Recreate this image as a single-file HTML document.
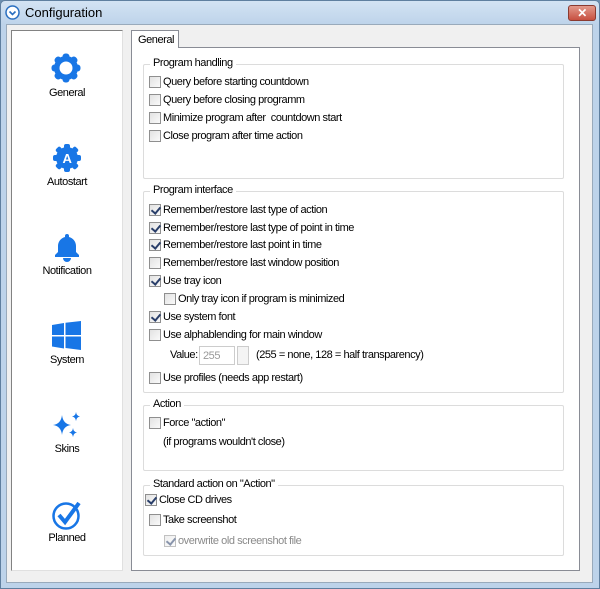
<!DOCTYPE html>
<html><head><style>
*{margin:0;padding:0;box-sizing:border-box}
body{width:600px;height:589px;overflow:hidden;font-family:"Liberation Sans",sans-serif;font-size:11px;letter-spacing:-0.45px;color:#000;background:#6d8fb0;position:relative}
.win{position:absolute;left:0;top:0;width:600px;height:589px;background:linear-gradient(#d3e3f3,#bdd3ea 24px);border:1px solid #5f7f9f;border-radius:5px 5px 0 0}
.body{position:absolute;left:6px;top:24px;width:587px;height:559px;background:#f0f0f0;border:1px solid #99aabb}
.a{position:absolute;white-space:nowrap}
.cb{position:absolute;width:12px;height:12px;border:1px solid #8f8f8f;background:linear-gradient(135deg,#e2e2e2,#fafafa)}
.cb.c::after{content:"";position:absolute;left:3px;top:0px;width:4px;height:7px;border:solid #2a3f6a;border-width:0 2px 2px 0;transform:rotate(40deg)}
.cb.d{opacity:.55}
.g{position:absolute;left:143px;width:421px;border:1px solid #dcdcdc;border-radius:2px}
.gt{position:absolute;left:6px;top:-8px;background:#fff;padding:0 3px}
.nav{position:absolute;text-align:center;width:112px;left:11px}
</style></head><body>
<div class="win">
<svg class="a" style="left:4px;top:4px" width="15" height="15"><circle cx="7.5" cy="7.5" r="6.5" fill="#fff" stroke="#2a6fc0" stroke-width="1.5"/><path d="M4.5 6.5 L7.5 9.5 L10.5 6.5" fill="none" stroke="#2a6fc0" stroke-width="1.6"/></svg>
<div class="a" style="left:24px;top:4px;font-size:13px;letter-spacing:0">Configuration</div>
<div class="a" style="left:567px;top:4px;width:28px;height:16px;border-radius:3px;background:linear-gradient(#e39a8c,#c75040);border:1px solid #8a3a30;color:#fff;font-weight:bold;text-align:center;line-height:14px;font-size:12px">✕</div>
</div>
<div class="body"></div>
<div class="a" style="left:11px;top:30px;width:112px;height:541px;background:#fff;border:1px solid #828282;border-right-color:#e0e0e0;border-bottom-color:#e0e0e0"></div>
<svg class="a" style="left:51px;top:53px" width="30" height="30" viewBox="0 0 30 30"><g fill="#1876e6"><circle cx="15" cy="15" r="12"/><g><rect x="11.5" y="0.5" width="7" height="29" rx="3"/><rect x="11.5" y="0.5" width="7" height="29" rx="3" transform="rotate(45 15 15)"/><rect x="11.5" y="0.5" width="7" height="29" rx="3" transform="rotate(90 15 15)"/><rect x="11.5" y="0.5" width="7" height="29" rx="3" transform="rotate(135 15 15)"/></g></g><circle cx="15" cy="15" r="6.5" fill="#fff"/></svg>
<div class="nav" style="top:87px">General</div>
<svg class="a" style="left:52px;top:143px" width="30" height="30" viewBox="0 0 30 30"><g fill="#1876e6"><circle cx="15" cy="15" r="11"/><rect x="12" y="1" width="6" height="28" rx="2"/><rect x="12" y="1" width="6" height="28" rx="2" transform="rotate(45 15 15)"/><rect x="12" y="1" width="6" height="28" rx="2" transform="rotate(90 15 15)"/><rect x="12" y="1" width="6" height="28" rx="2" transform="rotate(135 15 15)"/></g><text x="15" y="20" text-anchor="middle" fill="#fff" font-family="Liberation Sans" font-weight="bold" font-size="13">A</text></svg>
<div class="nav" style="top:176px">Autostart</div>
<svg class="a" style="left:52px;top:232px" width="30" height="30" viewBox="0 0 30 30"><path d="M15 2a2 2 0 0 1 2 2v1c4 1 7 4.5 7 9v6l3 3v2H3v-2l3-3v-6c0-4.5 3-8 7-9V4a2 2 0 0 1 2-2z" fill="#1876e6"/><path d="M11 26h8a4 4 0 0 1-8 0z" fill="#1876e6"/></svg>
<div class="nav" style="top:265px">Notification</div>
<svg class="a" style="left:52px;top:321px" width="29" height="29" viewBox="0 0 29 29"><path d="M0 4l12-2v12H0zM13.5 1.8L29 0v14H13.5zM0 15.5h12v12L0 25.5zM13.5 15.5H29V29l-15.5-2z" fill="#1876e6"/></svg>
<div class="nav" style="top:354px">System</div>
<svg class="a" style="left:52px;top:410px" width="30" height="30" viewBox="0 0 30 30"><g fill="#1876e6"><path d="M10 5 Q11 14 19 15 Q11 16 10 25 Q9 16 1 15 Q9 14 10 5z"/><path d="M24 2 Q24.5 6 28 6.5 Q24.5 7 24 11 Q23.5 7 20 6.5 Q23.5 6 24 2z"/><path d="M21 18 Q21.5 22 25 22.5 Q21.5 23 21 27 Q20.5 23 17 22.5 Q20.5 22 21 18z"/></g></svg>
<div class="nav" style="top:443px">Skins</div>
<svg class="a" style="left:51px;top:499px" width="32" height="32" viewBox="0 0 32 32"><circle cx="15" cy="17" r="12.5" fill="none" stroke="#1876e6" stroke-width="2.5"/><path d="M8 16l6 7L28 4" fill="none" stroke="#1876e6" stroke-width="4"/></svg>
<div class="nav" style="top:532px">Planned</div>
<div class="a" style="left:131px;top:47px;width:449px;height:524px;background:#fff;border:1px solid #898c95"></div>
<div class="a" style="left:131px;top:30px;width:48px;height:18px;background:#fff;border:1px solid #898c95;border-bottom:none;padding:3px 0 0 6px">General</div>
<div class="g" style="top:64px;height:115px"><span class="gt">Program handling</span></div>
<div class="cb" style="left:149px;top:76px"></div><div class="a" style="left:163px;top:76px">Query before starting countdown</div>
<div class="cb" style="left:149px;top:94px"></div><div class="a" style="left:163px;top:94px">Query before closing programm</div>
<div class="cb" style="left:149px;top:112px"></div><div class="a" style="left:163px;top:112px">Minimize program after&nbsp; countdown start</div>
<div class="cb" style="left:149px;top:130px"></div><div class="a" style="left:163px;top:130px">Close program after time action</div>
<div class="g" style="top:191px;height:202px"><span class="gt">Program interface</span></div>
<div class="cb c" style="left:149px;top:204px"></div><div class="a" style="left:163px;top:204px">Remember/restore last type of action</div>
<div class="cb c" style="left:149px;top:222px"></div><div class="a" style="left:163px;top:222px">Remember/restore last type of point in time</div>
<div class="cb c" style="left:149px;top:239px"></div><div class="a" style="left:163px;top:239px">Remember/restore last point in time</div>
<div class="cb" style="left:149px;top:257px"></div><div class="a" style="left:163px;top:257px">Remember/restore last window position</div>
<div class="cb c" style="left:149px;top:275px"></div><div class="a" style="left:163px;top:275px">Use tray icon</div>
<div class="cb" style="left:164px;top:293px"></div><div class="a" style="left:178px;top:293px">Only tray icon if program is minimized</div>
<div class="cb c" style="left:149px;top:311px"></div><div class="a" style="left:163px;top:311px">Use system font</div>
<div class="cb" style="left:149px;top:329px"></div><div class="a" style="left:163px;top:329px">Use alphablending for main window</div>
<div class="a" style="left:170px;top:349px">Value:</div>
<div class="a" style="left:199px;top:346px;width:36px;height:19px;border:1px solid #ccc;background:#fff;color:#999;padding:3px 0 0 3px">255</div>
<div class="a" style="left:237px;top:346px;width:12px;height:19px;border:1px solid #ccc;background:#f4f4f4"></div>
<div class="a" style="left:256px;top:349px">(255 = none, 128 = half transparency)</div>
<div class="cb" style="left:149px;top:372px"></div><div class="a" style="left:163px;top:372px">Use profiles (needs app restart)</div>
<div class="g" style="top:405px;height:66px"><span class="gt">Action</span></div>
<div class="cb" style="left:149px;top:417px"></div><div class="a" style="left:163px;top:417px">Force "action"</div>
<div class="a" style="left:163px;top:436px">(if programs wouldn't close)</div>
<div class="g" style="top:485px;height:71px"><span class="gt">Standard action on "Action"</span></div>
<div class="cb c" style="left:145px;top:494px"></div><div class="a" style="left:159px;top:494px">Close CD drives</div>
<div class="cb" style="left:149px;top:514px"></div><div class="a" style="left:163px;top:514px">Take screenshot</div>
<div class="cb c d" style="left:164px;top:535px"></div><div class="a" style="left:178px;top:535px;color:#8a8a8a">overwrite old screenshot file</div>
</body></html>
